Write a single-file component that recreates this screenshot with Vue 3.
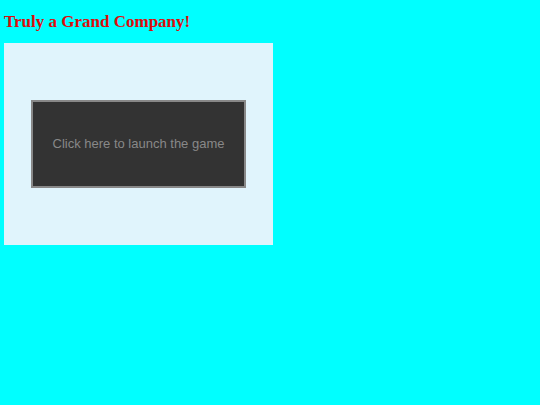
<template>
    <div class="page">
        <h1>Truly a Grand Company!</h1>
        <div class="game">
            <button class="launch" v-show="!launched" @click="launchGame">Click here to launch the game</button>
        </div>
    </div>
</template>

<script setup>
import { ref } from 'vue'
const launched = ref(false)
//hide the button once the game starts
const launchGame = () => {
    launched.value = true
}
</script>

<style>
body{
    background-color: #00ffff;
}
</style>

<style scoped>
.page{
    padding: 12px 4px;
}
h1{
    margin: 0 0 12px;
    font-family: "Liberation Serif", "Times New Roman", serif;
    font-size: 17px;
    line-height: 19px;
    color: #dd0c0c;
}
.game{
    display: flex;
    align-items: center;
    justify-content: center;
    width: 51%;
    max-width: 269px;
    aspect-ratio: 4 / 3;
    background-color: #e0f4fc;
}
.launch{
    width: 80%;
    padding: 34px 8px;
    border: 2px solid #888888;
    background-color: #333333;
    color: #888888;
    font-family: "Liberation Sans", Arial, sans-serif;
    font-size: 13px;
    line-height: 16px;
    cursor: pointer;
}
</style>
